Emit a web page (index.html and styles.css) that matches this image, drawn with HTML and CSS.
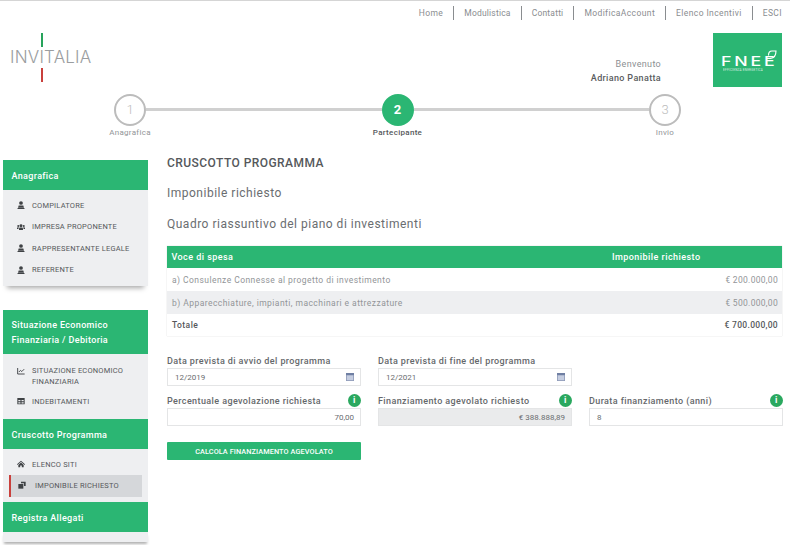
FILE: index.html
```html
<!DOCTYPE html>
<html lang="it">
<head>
  <meta charset="UTF-8">
  <title>Cruscotto Programma</title>
  <link rel="stylesheet" href="styles.css">
</head>
<body>
  <nav class="topnav">
    <a>Home</a><a class="tight">Modulistica</a><a class="tight">Contatti</a><a>ModificaAccount</a><a>Elenco Incentivi</a><a>ESCI</a>
  </nav>

  <header class="brand">
    <div class="logo">
      <span class="tick tick-green"></span>
      <span class="logo-text">INVITALIA</span>
      <span class="tick tick-red"></span>
    </div>
    <div class="welcome">
      <div>Benvenuto</div>
      <strong>Adriano Panatta</strong>
    </div>
    <div class="fnee">
      <span class="fnee-name">FNEE</span>
      <svg class="fnee-leaf" viewBox="0 0 12 9"><path d="M1 8.500H4.500C8.500 8.500 11 6 11 1H7C4.500 1 3.500 2.500 3.500 5.500" fill="none" stroke="#fff" stroke-width="1.100"/></svg>
      <span class="fnee-sub">EFFICIENZA ENERGETICA</span>
    </div>
  </header>

  <div class="steps">
    <div class="step"><span class="dot">1</span><span class="step-label">Anagrafica</span></div>
    <div class="bar"></div>
    <div class="step step-on"><span class="dot">2</span><span class="step-label">Partecipante</span></div>
    <div class="bar"></div>
    <div class="step"><span class="dot">3</span><span class="step-label">Invio</span></div>
  </div>

  <div class="layout">
    <aside class="sidebar">
      <div class="panel-head">Anagrafica</div>
      <ul class="menu menu-shadow">
        <li><svg class="ico" viewBox="0 0 12 12"><use href="#i-user"/></svg>COMPILATORE</li>
        <li><svg class="ico" viewBox="0 0 12 12"><use href="#i-users"/></svg>IMPRESA PROPONENTE</li>
        <li><svg class="ico" viewBox="0 0 12 12"><use href="#i-user"/></svg>RAPPRESENTANTE LEGALE</li>
        <li><svg class="ico" viewBox="0 0 12 12"><use href="#i-user"/></svg>REFERENTE</li>
      </ul>

      <div class="panel-head panel-tall">Situazione Economico Finanziaria / Debitoria</div>
      <ul class="menu menu-fin">
        <li><svg class="ico" viewBox="0 0 12 12"><use href="#i-chart"/></svg><span>SITUAZIONE ECONOMICO FINANZIARIA</span></li>
        <li><svg class="ico" viewBox="0 0 12 12"><use href="#i-table"/></svg>INDEBITAMENTI</li>
      </ul>

      <div class="panel-head">Cruscotto Programma</div>
      <ul class="menu menu-tight">
        <li><svg class="ico" viewBox="0 0 12 12"><use href="#i-home"/></svg>ELENCO SITI</li>
        <li class="active"><svg class="ico" viewBox="0 0 12 12"><use href="#i-copy"/></svg>IMPONIBILE RICHIESTO</li>
      </ul>

      <div class="panel-head">Registra Allegati</div>
      <div class="menu-end"></div>
    </aside>

    <main class="content">
      <h1>CRUSCOTTO PROGRAMMA</h1>
      <h2>Imponibile richiesto</h2>
      <h2>Quadro riassuntivo del piano di investimenti</h2>

      <table class="grid">
        <thead>
          <tr><th>Voce di spesa</th><th class="col-imp">Imponibile richiesto</th></tr>
        </thead>
        <tbody>
          <tr><td>a) Consulenze Connesse al progetto di investimento</td><td class="num">€ 200.000,00</td></tr>
          <tr class="alt"><td>b) Apparecchiature, impianti, macchinari e attrezzature</td><td class="num">€ 500.000,00</td></tr>
          <tr class="total"><td>Totale</td><td class="num">€ 700.000,00</td></tr>
        </tbody>
      </table>

      <div class="form-row">
        <div class="field">
          <label>Data prevista di avvio del programma</label>
          <div class="input">12/2019<svg class="cal" viewBox="0 0 10 10"><use href="#i-cal"/></svg></div>
        </div>
        <div class="field">
          <label>Data prevista di fine del programma</label>
          <div class="input">12/2021<svg class="cal" viewBox="0 0 10 10"><use href="#i-cal"/></svg></div>
        </div>
        <div class="field"></div>
      </div>
      <div class="form-row form-row-2">
        <div class="field">
          <label>Percentuale agevolazione richiesta<span class="info">i</span></label>
          <div class="input input-right">70,00</div>
        </div>
        <div class="field">
          <label>Finanziamento agevolato richiesto<span class="info">i</span></label>
          <div class="input input-right input-off">€ 388.888,89</div>
        </div>
        <div class="field">
          <label>Durata finanziamento (anni)<span class="info">i</span></label>
          <div class="input">8</div>
        </div>
      </div>
      <button class="calc">CALCOLA FINANZIAMENTO AGEVOLATO</button>
    </main>
  </div>

  <svg class="defs" width="0" height="0">
    <defs>
      <g id="i-user" fill="#3f4245"><circle cx="6" cy="3" r="2.800"/><path d="M2.500 6.800h7l1 3.200H1.500zM.8 10.400h10.400V12H.8z"/></g>
      <g id="i-users" fill="#3f4245"><circle cx="6" cy="4" r="2.200"/><circle cx="1.900" cy="4.500" r="1.500"/><circle cx="10.100" cy="4.500" r="1.500"/><path d="M3 10.500V8.400C3 7.200 4 6.600 5 6.600h2c1 0 2 .6 2 1.800v2.100z"/><path d="M0 9V7.400C0 6.600.6 6.300 1.500 6.300h1.200C2.300 7 2.200 8 2.200 9zM12 9V7.400c0-.8-.6-1.100-1.500-1.100H9.300c.4.7.5 1.700.5 2.700z"/></g>
      <g id="i-chart" fill="none" stroke="#3f4245" stroke-width="1.400"><path d="M1 1.500v9h10.500"/><path d="M2.800 7.500l2.400-2.400 2 1.700 3.500-3.500"/></g>
      <path id="i-table" fill="#3f4245" fill-rule="evenodd" d="M.5 1.500h11v9.500H.5zM2 4.500v2h3.200v-2zm4.800 0v2H10v-2zM2 7.800v1.800h3.200V7.800zm4.800 0v1.800H10V7.800z"/>
      <g id="i-home" fill="#3f4245"><path d="M6 1L0 6.500l.9.9L6 2.800l5.100 4.600.9-.9z"/><path d="M2 7.400L6 3.900l4 3.500V11H7.200V8.200H4.800V11H2z"/></g>
      <g id="i-copy" fill="#3f4245"><path d="M4.500 1H11.500v6.500H9V3.500H4.500z"/><path d="M.5 4.500h7.500V11.500H.5z"/></g>
      <g id="i-cal"><path d="M0 0h10v10H0z" fill="#8e9bb8"/><path d="M1 3h8v6H1z" fill="#c5cde0"/><path d="M0 0h10v2.500H0z" fill="#6f7fa3"/></g>
    </defs>
  </svg>
</body>
</html>
```

FILE: styles.css
```css
* {
  box-sizing: border-box;
}
body {
  margin: 0;
  height: 545px;
  overflow: hidden;
  background: white;
  color: #5f6265;
  font-family: "Roboto", "Liberation Sans", sans-serif;
  font-size: 9px;
}
.topnav {
  display: flex;
  justify-content: flex-end;
  height: 21px;
  padding: 5px 8px 0 0;
  border-top: 1px solid #d5d5d5;
  font-size: 8.5px;
  letter-spacing: .4px;
  color: #8a8d90;
}
.topnav a {
  height: 14px;
  line-height: 14px;
  padding: 0 10px;
  border-left: 1px solid #8a8d90;
}
.topnav .tight {
  letter-spacing: .2px;
}
.topnav a:first-child {
  border-left: 0;
}
.topnav a:last-child {
  padding-right: 0;
}

.brand {
  display: flex;
  height: 66px;
  padding-right: 8px;
  align-items: flex-start;
}
.logo {
  display: flex;
  flex-direction: column;
  align-items: flex-start;
  width: 528px;
  margin-top: 12px;
  padding-left: 41px;
}
.tick {
  width: 2px;
  height: 14px;
}
.tick-green {
  background: #27a35b;
}
.tick-red {
  background: #c9403c;
}
.logo-text {
  margin: 2px 0 2px -31px;
  font-family: "Inter", "Liberation Sans", sans-serif;
  font-size: 17px;
  font-weight: 300;
  line-height: 17px;
  letter-spacing: .2px;
  color: #9a9da0;
}
.welcome {
  width: 134px;
  margin-top: 36px;
  text-align: right;
  line-height: 14px;
  letter-spacing: .35px;
  color: #8c8f92;
}
.welcome strong {
  font-weight: 500;
  color: #5a5d60;
}
.fnee {
  position: relative;
  width: 69px;
  height: 54px;
  margin-left: 52px;
  margin-top: 12px;
  padding: 23px 0 0 8px;
  background: #2bb673;
  color: white;
}
.fnee-name {
  display: block;
  font-family: "Inter", "Liberation Sans", sans-serif;
  font-size: 12.5px;
  font-weight: 500;
  line-height: 11px;
  letter-spacing: 2px;
  transform: scaleX(1.42);
  transform-origin: left center;
}
.fnee-leaf {
  position: absolute;
  top: 17px;
  right: 5px;
  width: 12px;
  height: 9px;
}
.fnee-sub {
  display: block;
  margin: 1px 0 0 2px;
  font-size: 3px;
  line-height: 4px;
  letter-spacing: .25px;
  white-space: nowrap;
  opacity: .8;
}

.steps {
  display: flex;
  align-items: flex-start;
  height: 60px;
  padding-left: 114px;
  margin-top: 7px;
}
.step {
  display: flex;
  flex-direction: column;
  align-items: center;
  width: 32px;
}
.dot {
  flex: none;
  width: 32px;
  height: 32px;
  border: 2px solid #bcbcbc;
  border-radius: 50%;
  font-size: 13px;
  font-weight: 300;
  line-height: 28px;
  text-align: center;
  color: #bcbcbc;
}
.step-label {
  margin-top: 1px;
  font-size: 8px;
  line-height: 12px;
  letter-spacing: .3px;
  color: #929598;
  white-space: nowrap;
}
.step-on .dot {
  border-color: #2bb673;
  background: #2bb673;
  color: white;
  font-weight: 700;
}
.step-on .step-label {
  font-weight: 500;
  color: #55585b;
}
.bar {
  width: 235.500px;
  height: 3px;
  margin-top: 14px;
  background: #d0d0d0;
}

.layout {
  display: flex;
  align-items: flex-start;
}
.sidebar {
  flex: none;
  width: 145px;
  margin: 6px 0 0 3px;
}
.panel-head {
  display: flex;
  align-items: center;
  height: 30px;
  padding: 2px 8.500px 0;
  background: #2bb673;
  color: white;
  font-size: 9px;
  font-weight: 500;
  letter-spacing: .35px;
}
.panel-tall {
  height: 44px;
  line-height: 15px;
}
.menu {
  margin: 0;
  padding: 4px 0 0;
  list-style: none;
  background: #eeeff1;
  color: #55585b;
  font-size: 7.500px;
  letter-spacing: .2px;
}
.menu li {
  display: flex;
  align-items: flex-start;
  padding: 5.500px 4px 5px 14px;
  line-height: 11px;
}
.menu li span {
  display: block;
}
.ico {
  flex: none;
  width: 8px;
  height: 8px;
  margin: 1.500px 7px 0 0;
}
.menu-shadow {
  height: 96px;
  margin-bottom: 24px;
  box-shadow: 0 6px 5px -4px #a8a8a8;
}
.menu-fin {
  height: 65px;
  padding-top: 5.500px;
}
.menu-fin li:first-child {
  padding-bottom: 3px;
}
.menu-tight {
  height: 53px;
  padding: 4px 0 0;
}
.menu .active {
  height: 22px;
  margin: 0 6px 0 6px;
  padding: 5px 0 0 7px;
  background: #d5d7da;
  border-left: 2px solid #c9403c;
}
.active .ico {
  margin-right: 9px;
}
.menu-end {
  height: 10px;
  background: #eeeff1;
  box-shadow: 0 3px 3px -1px #b0b0b0;
}

.content {
  flex: none;
  width: 615px;
  margin-left: 19px;
}
h1 {
  margin: 1px 0 0;
  font-size: 12px;
  font-weight: 500;
  line-height: 16px;
  letter-spacing: .45px;
  color: #55585b;
}
h2 {
  margin: 15px 0 0;
  font-size: 12px;
  font-weight: 400;
  line-height: 16px;
  letter-spacing: .5px;
  color: #6a6d70;
}
h1 + h2 {
  margin-top: 14px;
}
.grid {
  width: 100%;
  margin-top: 14px;
  border-collapse: collapse;
  letter-spacing: .45px;
  box-shadow: 0 0 1px #c8c8c8;
}
.grid th {
  height: 22px;
  padding: 0 4.500px;
  background: #2bb673;
  color: white;
  font-weight: 500;
  text-align: left;
}
.grid td {
  height: 23px;
  padding: 0 5px;
  color: #929598;
  font-size: 8.500px;
}
.grid .col-imp {
  width: 170px;
  padding: 0;
}
.grid .num {
  text-align: right;
  letter-spacing: .3px;
  padding-right: 4px;
}
.alt td {
  background: #eeeff1;
}
.grid .total td {
  height: 22px;
  color: #55585b;
  font-weight: 500;
}

.form-row {
  display: grid;
  grid-template-columns: repeat(3, 194px);
  column-gap: 17px;
  margin-top: 17px;
}
.form-row-2 {
  margin-top: 7px;
}
.field label {
  display: flex;
  justify-content: space-between;
  align-items: center;
  height: 15px;
  font-weight: 500;
  letter-spacing: .4px;
  color: #65686b;
}
.input {
  display: flex;
  justify-content: space-between;
  align-items: center;
  height: 18px;
  padding: 0 6px 0 7px;
  border: 1px solid #e4e5e6;
  font-size: 8px;
  color: #6a6d70;
}
.input-right {
  justify-content: flex-end;
}
.input-off {
  background: #eaebec;
}
.cal {
  width: 8px;
  height: 8px;
}
.info {
  flex: none;
  width: 13px;
  height: 13px;
  border-radius: 50%;
  background: #2aa85f;
  color: white;
  font-size: 9px;
  font-weight: 700;
  line-height: 13px;
  text-align: center;
}
.calc {
  display: block;
  width: 194px;
  height: 18px;
  margin-top: 16px;
  padding: 0;
  border: 0;
  border-radius: 1px;
  background: #2bb673;
  color: white;
  font-family: inherit;
  font-size: 7.300px;
  font-weight: 500;
  letter-spacing: .1px;
}
.defs {
  position: absolute;
}
```
